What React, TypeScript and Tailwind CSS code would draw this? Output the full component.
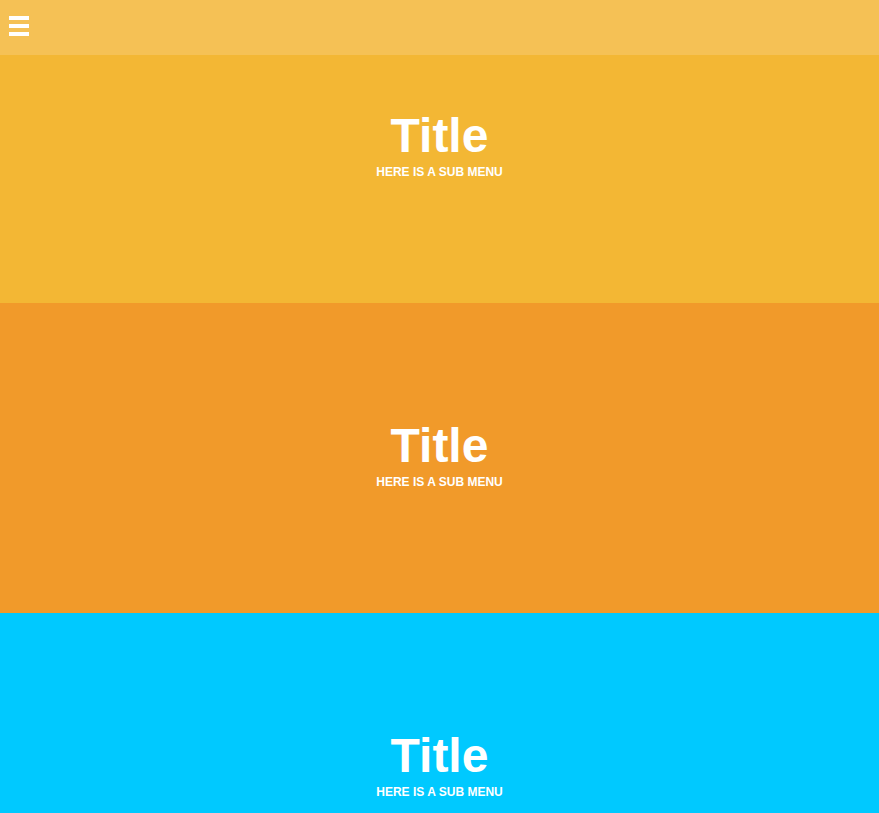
import React from "react";

function Hero({ bg, height, pt }: { bg: string; height: string; pt: string }) {
  return (
    <section className={`${height} ${bg} ${pt} text-center text-white`}>
      <h1 className="text-[48px] font-bold leading-[48px]">Title</h1>
      <p className="mt-[6px] text-[12px] font-bold leading-[12px] uppercase">Here is a sub menu</p>
    </section>
  );
}

export default function App() {
  const font = { fontFamily: '"Liberation Sans", Arial, sans-serif' };
  return (
    <div className="w-full overflow-hidden" style={font}>
      <header className="h-[55px] bg-[#f5c155] pl-[9px] pt-[16px]">
        <div className="flex w-[20px] flex-col gap-[4px]">
          <span className="block h-[4px] w-[20px] bg-white" />
          <span className="block h-[4px] w-[20px] bg-white" />
          <span className="block h-[4px] w-[20px] bg-white" />
        </div>
      </header>
      <Hero bg="bg-[#f3b734]" height="h-[248px]" pt="pt-[57px]" />
      <Hero bg="bg-[#f19a2a]" height="h-[310px]" pt="pt-[119px]" />
      <Hero bg="bg-[#00c9ff]" height="h-[310px]" pt="pt-[119px]" />
    </div>
  );
}
